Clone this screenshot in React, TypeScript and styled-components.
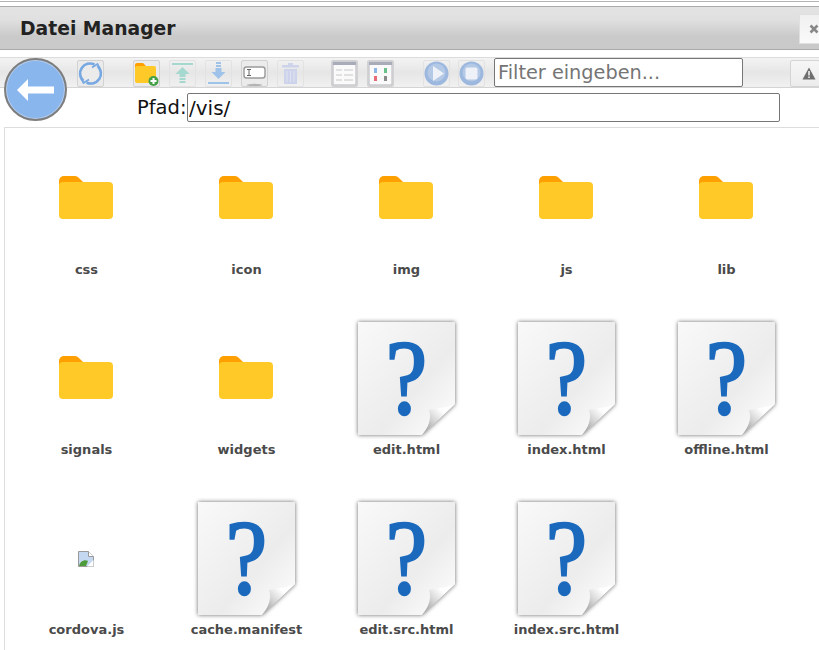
import React, { FunctionComponent } from "react";
import styled, { createGlobalStyle } from "styled-components";

const Global = createGlobalStyle`
  html, body {
    margin: 0;
    padding: 0;
    height: 650px;
    overflow: hidden;
    background: #fff;
    font-family: "DejaVu Sans", Verdana, sans-serif;
  }
`;

const Page = styled.div`
  position: relative;
  width: 819px;
  height: 650px;
  overflow: hidden;
  background: #fff;
`;

const TopEdge = styled.div`
  height: 4px;
  margin-top: 1px;
  border-top: 1px solid #b4b4b4;
`;

const TitleBar = styled.div`
  height: 44px;
  box-sizing: border-box;
  display: flex;
  align-items: center;
  justify-content: space-between;
  padding-left: 20px;
  border-top: 1px solid #aaa;
  border-bottom: 1px solid #aaa;
  background: linear-gradient(#e3e3e3 0%, #e0e0e0 30%, #cacaca 70%, #c9c9c9 100%);
`;

const Title = styled.span`
  font-size: 18.75px;
  font-weight: bold;
  color: #222;
`;

const CloseButton = styled.div`
  width: 24px;
  height: 30px;
  margin-right: -4px;
  margin-top: 1px;
  display: flex;
  align-items: center;
  padding-left: 9px;
  box-sizing: border-box;
  border: 1px solid #e0e0e0;
  background: linear-gradient(#f0f0f0, #fafafa);
`;

const Toolbar = styled.div`
  height: 31px;
  margin-top: 7px;
  box-sizing: border-box;
  display: flex;
  align-items: flex-end;
  padding-left: 77px;
  border-top: 1px solid #dcdcdc;
  border-bottom: 1px solid #d4d4d4;
  background: linear-gradient(#f3f3f3 0%, #e6e6e6 50%, #f1f1f1 100%);
`;

const ToolGroup = styled.div<{ $gap?: number; $after: number }>`
  display: flex;
  gap: ${({ $gap }) => $gap ?? 9}px;
  margin-right: ${({ $after }) => $after}px;
`;

const ToolButton = styled.div<{ $strong?: boolean }>`
  width: 27px;
  height: 27px;
  box-sizing: border-box;
  border: 1px solid ${({ $strong }) => ($strong ? "#d2d2d2" : "#e2e2e2")};
  border-radius: 2px;
  background: ${({ $strong }) => ($strong ? "#ebebeb" : "transparent")};
  display: flex;
  align-items: center;
  justify-content: center;
  svg {
    filter: blur(0.3px);
  }
`;

const FilterInput = styled.input`
  width: 249px;
  height: 29px;
  box-sizing: border-box;
  margin: 0;
  padding: 0 3px;
  border: 1px solid #767676;
  border-radius: 2px;
  background: #fff;
  font-family: "DejaVu Sans", sans-serif;
  font-size: 19.3px;
  color: #222;
  &::placeholder {
    color: #757575;
    opacity: 1;
  }
`;

const WarnButton = styled.div`
  margin-left: auto;
  margin-right: -1px;
  width: 30px;
  height: 27px;
  box-sizing: border-box;
  border: 1px solid #d4d4d4;
  border-radius: 2px;
  background: linear-gradient(#f6f6f6, #ececec);
  display: flex;
  align-items: center;
  padding-left: 11px;
`;

const BackButton = styled.div`
  position: absolute;
  left: 4px;
  top: 58px;
  width: 63px;
  height: 63px;
  box-sizing: border-box;
  border-radius: 50%;
  border: 2px solid #7e7e7e;
  box-shadow: inset 0 0 0 1px #b9cde8;
  background: #8ab6ee;
  display: flex;
  align-items: center;
  justify-content: center;
`;

const PathRow = styled.div`
  display: flex;
  align-items: center;
  margin-top: 5px;
  padding-left: 137px;
  height: 29px;
`;

const PathLabel = styled.label`
  font-size: 19.5px;
  color: #111;
  width: 50px;
`;

const PathInput = styled.input`
  width: 593px;
  height: 29px;
  box-sizing: border-box;
  margin: 0;
  padding: 0 1px;
  border: 1px solid #767676;
  border-radius: 2px;
  background: #fff;
  font-family: "DejaVu Sans", sans-serif;
  font-size: 20px;
  color: #111;
`;

const FilePanel = styled.div`
  margin: 5px 0 0 4px;
  height: 560px;
  box-sizing: border-box;
  border: 1px solid #ddd;
  border-right: 0;
  padding: 14px 0 0 1px;
  display: grid;
  grid-template-columns: repeat(5, 160px);
  grid-auto-rows: 180px;
`;

const Cell = styled.div`
  display: flex;
  flex-direction: column;
  align-items: center;
`;

const IconBox = styled.div`
  height: 113px;
  display: flex;
  align-items: center;
  justify-content: center;
`;

const FileName = styled.div`
  margin-top: 7px;
  padding-left: 1px;
  font-size: 13px;
  line-height: 16px;
  font-weight: bold;
  color: #4a4a4a;
`;

const FolderSvg = styled.svg`
  display: block;
  margin-bottom: 2px;
`;

const PageSvg = styled.svg`
  display: block;
  overflow: visible;
  margin-left: 1px;
  filter: drop-shadow(0 0 2px rgba(0, 0, 0, 0.6));
`;

const QuestionMark = styled.text`
  font-family: "Liberation Serif", serif;
  font-size: 106px;
  fill: #1a69bd;
  stroke: #1a69bd;
  stroke-width: 2.4px;
`;

const FolderIcon = () => (
  <FolderSvg width="54" height="43" viewBox="0 0 54 43">
    <path d="M0 5a5 5 0 0 1 5-5h11c2 0 3 1 4 2l4 4v12H0z" fill="#ffa000" />
    <path d="M0 10a4 4 0 0 1 4-4h46a4 4 0 0 1 4 4v29a4 4 0 0 1-4 4H4a4 4 0 0 1-4-4z" fill="#ffca28" />
  </FolderSvg>
);

const UnknownFileIcon: FunctionComponent<{ id: string }> = ({ id }) => (
  <PageSvg width="98" height="113" viewBox="0 0 98 113">
    <defs>
      <linearGradient id={`page-${id}`} x1="0" y1="0" x2="1" y2="1">
        <stop offset="0" stopColor="#f9f9f9" />
        <stop offset="0.6" stopColor="#ececec" />
        <stop offset="0.85" stopColor="#f8f8f8" />
      </linearGradient>
      <linearGradient id={`fold-${id}`} x1="0" y1="1" x2="1" y2="0">
        <stop offset="0" stopColor="#8c8c8c" />
        <stop offset="0.4" stopColor="#d4d4d4" />
        <stop offset="0.7" stopColor="#ffffff" />
      </linearGradient>
    </defs>
    <path d="M0 0H97V82L64 113H0Z" fill={`url(#page-${id})`} />
    <path d="M97 82C88 86 78 86 71 88C74 97 70 106 64 113Z" fill={`url(#fold-${id})`} />
    <QuestionMark x="0" y="92" textAnchor="middle" transform="translate(48.500 0) scale(0.88 1)">?</QuestionMark>
  </PageSvg>
);

const BrokenImageIcon = () => (
  <svg width="16" height="16" viewBox="0 0 16 16">
    <path d="M.5.5h10l5 5v10H.5z" fill="#c5d8f2" stroke="#9a9a9a" />
    <path d="M10.500.5v5h5" fill="#fff" stroke="#9a9a9a" />
    <path d="M1 15c1-5 6-7 9-5l-2 5z" fill="#4d9b3a" />
    <path d="M9 15.500l6.500-6.500v6.500z" fill="#fff" />
  </svg>
);

const files = [
  { name: "css", kind: "folder" },
  { name: "icon", kind: "folder" },
  { name: "img", kind: "folder" },
  { name: "js", kind: "folder" },
  { name: "lib", kind: "folder" },
  { name: "signals", kind: "folder" },
  { name: "widgets", kind: "folder" },
  { name: "edit.html", kind: "file" },
  { name: "index.html", kind: "file" },
  { name: "offline.html", kind: "file" },
  { name: "cordova.js", kind: "broken" },
  { name: "cache.manifest", kind: "file" },
  { name: "edit.src.html", kind: "file" },
  { name: "index.src.html", kind: "file" },
];

const App = () => {
  return (
    <Page>
      <Global />
      <TopEdge />
      <TitleBar>
        <Title>Datei Manager</Title>
        <CloseButton>
          <svg width="10" height="10" viewBox="0 0 10 10">
            <path d="M1.500 1.500l7 7M8.500 1.500l-7 7" stroke="#888" strokeWidth="2.600" />
          </svg>
        </CloseButton>
      </TitleBar>
      <Toolbar>
        <ToolGroup $after={29}>
          <ToolButton $strong>
            <svg width="25" height="25" viewBox="0 0 25 25" fill="none" stroke="#78a8e2" strokeWidth="2.600">
              <path d="M16.500 3.500A10 10 0 0 0 5.500 20" />
              <path d="M8.500 21.500A10 10 0 0 0 19.500 5" />
              <path d="M2 15l3.500 7 5.500-3.500" strokeWidth="1.800" />
              <path d="M23 10l-3.500-7-5.500 3.500" strokeWidth="1.800" />
            </svg>
          </ToolButton>
        </ToolGroup>
        <ToolGroup $after={27}>
          <ToolButton $strong>
            <svg width="25" height="25" viewBox="0 0 25 25">
              <path d="M1 4a2 2 0 0 1 2-2h6l3 3v8H1z" fill="#ffa000" />
              <path d="M1 7a2 2 0 0 1 2-2h17a2 2 0 0 1 2 2v13a2 2 0 0 1-2 2H3a2 2 0 0 1-2-2z" fill="#ffca28" />
              <circle cx="19.500" cy="20" r="5" fill="#43a047" />
              <path d="M19.500 17v6M16.500 20h6" stroke="#fff" strokeWidth="2" />
            </svg>
          </ToolButton>
          <ToolButton>
            <svg width="25" height="25" viewBox="0 0 25 25" fill="#a5d8cf">
              <rect x="2" y="2" width="21" height="2" />
              <path d="M12.500 6l7 7h-4v3h-6v-3h-4z" />
              <rect x="9.500" y="17" width="6" height="2" />
              <rect x="9.500" y="20" width="6" height="2" />
            </svg>
          </ToolButton>
          <ToolButton>
            <svg width="25" height="25" viewBox="0 0 25 25" fill="#9fc3e8">
              <rect x="10" y="1" width="5" height="2" />
              <rect x="10" y="4" width="5" height="2" />
              <path d="M12.500 18l-7-7h4V7h6v4h4z" />
              <rect x="2" y="21" width="21" height="2" />
            </svg>
          </ToolButton>
          <ToolButton $strong>
            <svg width="25" height="25" viewBox="0 0 25 25">
              <rect x="2" y="6" width="21" height="11" rx="2.500" fill="#fff" stroke="#9a9a9a" strokeWidth="1.400" />
              <path d="M5 8.500h4M5 14.500h4M7 8.500v6" stroke="#666" strokeWidth="1" fill="none" />
              <ellipse cx="12.500" cy="24" rx="8" ry="1.200" fill="#b4b4b4" />
            </svg>
          </ToolButton>
          <ToolButton>
            <svg width="25" height="25" viewBox="0 0 25 25" fill="#cdd3ea">
              <rect x="4" y="4" width="17" height="2.500" rx="1" />
              <rect x="10" y="2" width="5" height="2" />
              <path d="M6 8h13v15H6z" />
              <path d="M9 10v11M12.500 10v11M16 10v11" stroke="#e0e4f0" />
            </svg>
          </ToolButton>
        </ToolGroup>
        <ToolGroup $after={29}>
          <ToolButton $strong>
            <svg width="25" height="25" viewBox="0 0 25 25">
              <rect x="1" y="1" width="23" height="23" fill="#fafafa" stroke="#b4b4bc" />
              <rect x="1" y="1" width="23" height="3" fill="#a8acb8" />
              <path d="M4 9h6M12 9h9M4 14h6M12 14h9M4 19h6M12 19h9" stroke="#c8c8c8" />
            </svg>
          </ToolButton>
          <ToolButton $strong>
            <svg width="25" height="25" viewBox="0 0 25 25">
              <rect x="1" y="1" width="23" height="23" fill="#fafafa" stroke="#b4b4bc" />
              <rect x="1" y="1" width="23" height="3" fill="#a8acb8" />
              <path d="M6 7h3v5H6z" fill="#8db8e6" />
              <path d="M16 7h3v5h-3z" fill="#6cc08a" />
              <path d="M6 15h3v5H6z" fill="#e86a78" />
              <path d="M16 15h3v5h-3z" fill="#8a8a8a" />
            </svg>
          </ToolButton>
        </ToolGroup>
        <ToolGroup $gap={8} $after={9}>
          <ToolButton>
            <svg width="25" height="25" viewBox="0 0 25 25">
              <circle cx="12.500" cy="12.500" r="12" fill="#9db8de" />
              <circle cx="12.500" cy="11.500" r="9" fill="#b4c9e6" />
              <path d="M9 5l11 7.500L9 20z" fill="#eef2f8" />
            </svg>
          </ToolButton>
          <ToolButton>
            <svg width="25" height="25" viewBox="0 0 25 25">
              <circle cx="12.500" cy="12.500" r="12" fill="#9db8de" />
              <circle cx="12.500" cy="11.500" r="9" fill="#b4c9e6" />
              <rect x="6.500" y="6.500" width="12" height="12" rx="2" fill="#eef2f8" />
            </svg>
          </ToolButton>
        </ToolGroup>
        <FilterInput placeholder="Filter eingeben..." />
        <WarnButton>
          <svg width="14" height="13" viewBox="0 0 14 13">
            <path d="M7 0.500L13.500 12.500H.5z" fill="#6e6e6e" />
            <path d="M7 4v4.500M7 9.500v1.500" stroke="#eee" strokeWidth="1.600" />
          </svg>
        </WarnButton>
      </Toolbar>
      <BackButton>
        <svg width="37" height="22" viewBox="0 0 37 22">
          <path d="M0 11L11 0V7.500H37V14.500H11V22Z" fill="#fff" />
        </svg>
      </BackButton>
      <PathRow>
        <PathLabel>Pfad:</PathLabel>
        <PathInput defaultValue="/vis/" />
      </PathRow>
      <FilePanel>
        {files.map((f) => (
          <Cell key={f.name}>
            <IconBox>
              {f.kind === "folder" && <FolderIcon />}
              {f.kind === "file" && <UnknownFileIcon id={f.name.replace(/\./g, "-")} />}
              {f.kind === "broken" && <BrokenImageIcon />}
            </IconBox>
            <FileName>{f.name}</FileName>
          </Cell>
        ))}
      </FilePanel>
    </Page>
  );
};

export default App;
